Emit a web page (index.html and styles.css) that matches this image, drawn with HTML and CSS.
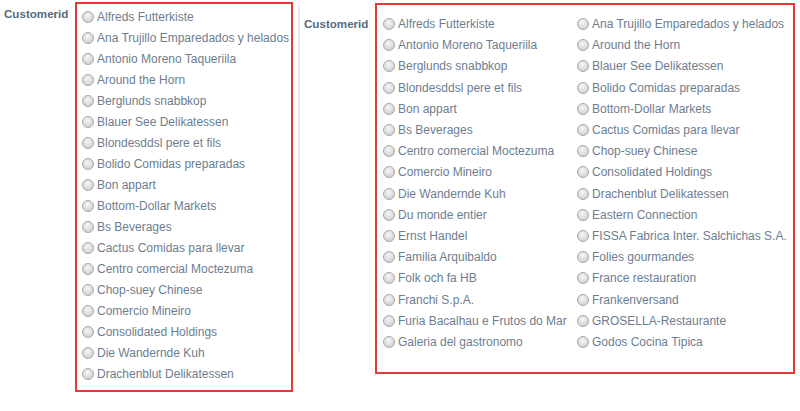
FILE: index.html
```html
<!DOCTYPE html>
<html>
<head>
<meta charset="utf-8">
<link rel="stylesheet" href="styles.css">
</head>
<body>
<div class="page">
  <div class="field field-a">
    <div class="label">Customerid</div>
    <div class="box box-a">
      <label class="opt"><input type="radio" name="a"><span>Alfreds Futterkiste</span></label>
      <label class="opt"><input type="radio" name="a"><span>Ana Trujillo Emparedados y helados</span></label>
      <label class="opt"><input type="radio" name="a"><span>Antonio Moreno Taqueriila</span></label>
      <label class="opt"><input type="radio" name="a"><span>Around the Horn</span></label>
      <label class="opt"><input type="radio" name="a"><span>Berglunds snabbkop</span></label>
      <label class="opt"><input type="radio" name="a"><span>Blauer See Delikatessen</span></label>
      <label class="opt"><input type="radio" name="a"><span>Blondesddsl pere et fils</span></label>
      <label class="opt"><input type="radio" name="a"><span>Bolido Comidas preparadas</span></label>
      <label class="opt"><input type="radio" name="a"><span>Bon appart</span></label>
      <label class="opt"><input type="radio" name="a"><span>Bottom-Dollar Markets</span></label>
      <label class="opt"><input type="radio" name="a"><span>Bs Beverages</span></label>
      <label class="opt"><input type="radio" name="a"><span>Cactus Comidas para llevar</span></label>
      <label class="opt"><input type="radio" name="a"><span>Centro comercial Moctezuma</span></label>
      <label class="opt"><input type="radio" name="a"><span>Chop-suey Chinese</span></label>
      <label class="opt"><input type="radio" name="a"><span>Comercio Mineiro</span></label>
      <label class="opt"><input type="radio" name="a"><span>Consolidated Holdings</span></label>
      <label class="opt"><input type="radio" name="a"><span>Die Wandernde Kuh</span></label>
      <label class="opt"><input type="radio" name="a"><span>Drachenblut Delikatessen</span></label>
    </div>
  </div>
  <div class="divider"></div>
  <div class="field field-b">
    <div class="label">Customerid</div>
    <div class="box box-b">
      <label class="opt"><input type="radio" name="b"><span>Alfreds Futterkiste</span></label>
      <label class="opt"><input type="radio" name="b"><span>Ana Trujillo Emparedados y helados</span></label>
      <label class="opt"><input type="radio" name="b"><span>Antonio Moreno Taqueriila</span></label>
      <label class="opt"><input type="radio" name="b"><span>Around the Horn</span></label>
      <label class="opt"><input type="radio" name="b"><span>Berglunds snabbkop</span></label>
      <label class="opt"><input type="radio" name="b"><span>Blauer See Delikatessen</span></label>
      <label class="opt"><input type="radio" name="b"><span>Blondesddsl pere et fils</span></label>
      <label class="opt"><input type="radio" name="b"><span>Bolido Comidas preparadas</span></label>
      <label class="opt"><input type="radio" name="b"><span>Bon appart</span></label>
      <label class="opt"><input type="radio" name="b"><span>Bottom-Dollar Markets</span></label>
      <label class="opt"><input type="radio" name="b"><span>Bs Beverages</span></label>
      <label class="opt"><input type="radio" name="b"><span>Cactus Comidas para llevar</span></label>
      <label class="opt"><input type="radio" name="b"><span>Centro comercial Moctezuma</span></label>
      <label class="opt"><input type="radio" name="b"><span>Chop-suey Chinese</span></label>
      <label class="opt"><input type="radio" name="b"><span>Comercio Mineiro</span></label>
      <label class="opt"><input type="radio" name="b"><span>Consolidated Holdings</span></label>
      <label class="opt"><input type="radio" name="b"><span>Die Wandernde Kuh</span></label>
      <label class="opt"><input type="radio" name="b"><span>Drachenblut Delikatessen</span></label>
      <label class="opt"><input type="radio" name="b"><span>Du monde entier</span></label>
      <label class="opt"><input type="radio" name="b"><span>Eastern Connection</span></label>
      <label class="opt"><input type="radio" name="b"><span>Ernst Handel</span></label>
      <label class="opt"><input type="radio" name="b"><span>FISSA Fabrica Inter. Salchichas S.A.</span></label>
      <label class="opt"><input type="radio" name="b"><span>Familia Arquibaldo</span></label>
      <label class="opt"><input type="radio" name="b"><span>Folies gourmandes</span></label>
      <label class="opt"><input type="radio" name="b"><span>Folk och fa HB</span></label>
      <label class="opt"><input type="radio" name="b"><span>France restauration</span></label>
      <label class="opt"><input type="radio" name="b"><span>Franchi S.p.A.</span></label>
      <label class="opt"><input type="radio" name="b"><span>Frankenversand</span></label>
      <label class="opt"><input type="radio" name="b"><span>Furia Bacalhau e Frutos do Mar</span></label>
      <label class="opt"><input type="radio" name="b"><span>GROSELLA-Restaurante</span></label>
      <label class="opt"><input type="radio" name="b"><span>Galeria del gastronomo</span></label>
      <label class="opt"><input type="radio" name="b"><span>Godos Cocina Tipica</span></label>
    </div>
  </div>
</div>
</body>
</html>
```

FILE: styles.css
```css
html, body {
  margin: 0;
  padding: 0;
  background: #ffffff;
}

body {
  font-family: "Liberation Sans", Arial, sans-serif;
  width: 800px;
  height: 411px;
  overflow: hidden;
}

.page {
  display: flex;
  align-items: flex-start;
}

.field {
  display: flex;
  align-items: flex-start;
}

.field-a {
  padding-left: 4px;
}

.field-b {
  margin-left: 4px;
}

.label {
  width: 71px;
  flex: none;
  font-size: 11.6px;
  font-weight: bold;
  line-height: 14px;
  color: #566a7f;
}

.field-a .label {
  padding-top: 7px;
}

.field-b .label {
  padding-top: 17px;
}

.box {
  border: 2px solid #e53b37;
  box-sizing: border-box;
}

.box-a {
  margin-top: 2px;
  width: 218px;
  height: 390px;
  padding: 3px 4px 0 5px;
}

.box-b {
  margin-top: 3px;
  width: 420px;
  height: 371px;
  padding: 9px 4px 0 6px;
  display: grid;
  grid-template-columns: 194px auto;
  grid-auto-rows: 21.2px;
  align-content: start;
}

.divider {
  flex: none;
  width: 2px;
  height: 348px;
  margin-top: 5px;
  margin-left: 5px;
  background: #e6eaef;
}

.opt {
  display: flex;
  align-items: center;
  height: 21px;
  font-size: 12px;
  line-height: 21px;
  color: #6d7d90;
  white-space: nowrap;
}

.box-b .opt {
  height: 21.2px;
}

.opt input {
  -webkit-appearance: none;
  appearance: none;
  box-sizing: border-box;
  width: 12px;
  height: 12px;
  margin: -1px 3px 0 0;
  border: 1px solid #a8a8a8;
  border-radius: 50%;
  background: radial-gradient(circle at 45% 35%, #f6f6f6 0%, #dcdcdc 55%, #c6c6c6 100%);
  flex: none;
}
```
